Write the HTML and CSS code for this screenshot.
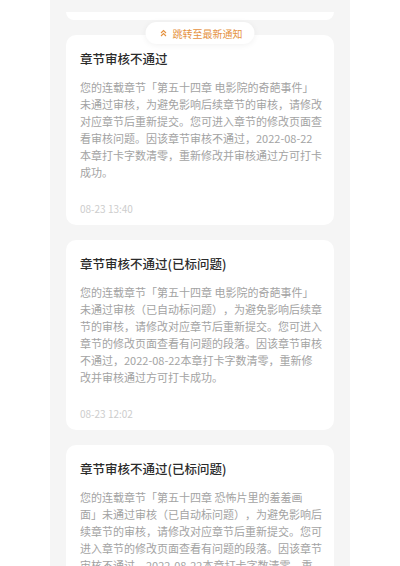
FILE: index.html
```html
<!DOCTYPE html>
<html lang="zh-CN">
<head>
    <meta charset="UTF-8">
    <meta name="viewport" content="width=device-width, initial-scale=1.0">
    <title>消息通知</title>
    <link rel="stylesheet" href="styles.css">
</head>
<body>
    <div class="page">
        <!-- previous card, mostly scrolled out -->
        <div class="card-stub"></div>

        <a href="#" class="jump-latest">
            <svg class="jump-icon" width="8" height="8" viewBox="0 0 8 8">
                <polyline points="1.5,4 4,1.5 6.5,4" fill="none" stroke="currentColor" stroke-width="1.1"/>
                <polyline points="1.5,7 4,4.5 6.5,7" fill="none" stroke="currentColor" stroke-width="1.1"/>
            </svg>
            跳转至最新通知
        </a>

        <div class="notice-list">
            <div class="notice-card">
                <div class="notice-title">章节审核不通过</div>
                <p class="notice-body">您的连载章节「第五十四章 电影院的奇葩事件」未通过审核，为避免影响后续章节的审核，请修改对应章节后重新提交。您可进入章节的修改页面查看审核问题。因该章节审核不通过，2022-08-22本章打卡字数清零，重新修改并审核通过方可打卡成功。</p>
                <div class="notice-time">08-23 13:40</div>
            </div>

            <div class="notice-card">
                <div class="notice-title">章节审核不通过(已标问题)</div>
                <p class="notice-body">您的连载章节「第五十四章 电影院的奇葩事件」未通过审核（已自动标问题），为避免影响后续章节的审核，请修改对应章节后重新提交。您可进入章节的修改页面查看有问题的段落。因该章节审核不通过，2022-08-22本章打卡字数清零，重新修改并审核通过方可打卡成功。</p>
                <div class="notice-time">08-23 12:02</div>
            </div>

            <div class="notice-card">
                <div class="notice-title">章节审核不通过(已标问题)</div>
                <p class="notice-body">您的连载章节「第五十四章 恐怖片里的羞羞画面」未通过审核（已自动标问题），为避免影响后续章节的审核，请修改对应章节后重新提交。您可进入章节的修改页面查看有问题的段落。因该章节审核不通过，2022-08-22本章打卡字数清零，重新修改并审核通过方可打卡成功。</p>
                <div class="notice-time">08-23 11:48</div>
            </div>
        </div>
    </div>
</body>
</html>
```

FILE: styles.css
```css
body {
    margin: 0;
    padding: 0;
    background-color: #fff;
    font-family: "Noto Sans CJK SC", "Noto Sans", sans-serif;
}
.page {
    position: relative;
    width: 300px;
    min-height: 566px;
    margin: 0 auto;
    padding: 12px 16px 0;
    box-sizing: border-box;
    background-color: #f5f5f5;
}
.card-stub {
    height: 8px;
    background: #fff;
    border-radius: 0 0 10px 10px;
}
.notice-list {
    display: flex;
    flex-direction: column;
    gap: 15px;
    margin-top: 15px;
}
.notice-card {
    background: #fff;
    border-radius: 10px;
    padding: 16px 11.5px 9px 14px;
}
.notice-title {
    font-size: 12.5px;
    line-height: 16px;
    font-weight: 500;
    color: #2b2b2b;
}
.notice-body {
    margin: 11.5px 0 0;
    font-size: 11px;
    line-height: 17px;
    color: #a3a3a3;
    text-spacing-trim: space-all; /* keep full-width brackets at line ends */
}
.notice-time {
    margin-top: 21.5px;
    font-size: 10px;
    line-height: 14px;
    color: #cdcdcd;
}
/* floating button over the list */
.jump-latest {
    position: absolute;
    top: 22px;
    left: 50%;
    transform: translateX(-50%);
    display: flex;
    align-items: center;
    gap: 5px;
    height: 22px;
    padding: 0 12px 0 14px;
    background: #fff;
    border-radius: 11px;
    box-shadow: 0 1px 6px rgba(0, 0, 0, 0.06);
    color: #e5923f;
    font-size: 10px;
    text-decoration: none;
    white-space: nowrap;
}
.jump-icon {
    display: block;
}
```
